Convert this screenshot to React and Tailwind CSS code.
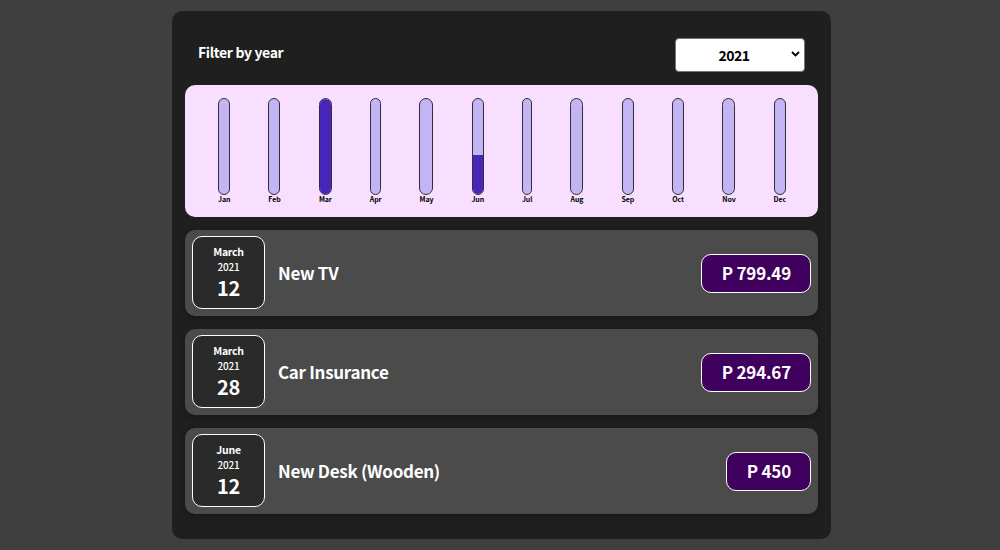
import React from 'react';

const months = [
  ['Jan', 'w-[12px]', 0], ['Feb', 'w-[12px]', 0], ['Mar', 'w-[13px]', 100], ['Apr', 'w-[11px]', 0],
  ['May', 'w-[14px]', 0], ['Jun', 'w-[12px]', 41], ['Jul', 'w-[10px]', 0], ['Aug', 'w-[13px]', 0],
  ['Sep', 'w-[12px]', 0], ['Oct', 'w-[12px]', 0], ['Nov', 'w-[13px]', 0], ['Dec', 'w-[12px]', 0],
];

const expenses = [
  { month: 'March', year: 2021, day: 12, title: 'New TV', amount: '799.49' },
  { month: 'March', year: 2021, day: 28, title: 'Car Insurance', amount: '294.67' },
  { month: 'June', year: 2021, day: 12, title: 'New Desk (Wooden)', amount: '450' },
];

function ChartBar({ label, width, fill }) {
  return (
    <div className={`flex flex-col items-center ${width}`}>
      <div className="flex h-[97px] w-full flex-col justify-end overflow-hidden rounded-full border border-[#313131] bg-[#c3b4f3]">
        <div className="w-full bg-[#4826b9]" style={{ height: `${fill}%` }} />
      </div>
      <div className="text-[7px] leading-[9px] font-bold tracking-[-0.1px] text-black">{label}</div>
    </div>
  );
}

function ExpenseItem({ item }) {
  return (
    <li className="flex h-[86px] items-center rounded-[10px] bg-[#4b4b4b] pr-[7px] pl-[7px] shadow-[0_2px_6px_rgba(0,0,0,0.25)]">
      <div className="mb-[1px] flex h-[73px] w-[73px] flex-col items-center rounded-[10px] border border-white bg-[#2a2a2a] pt-[7px]">
        <div className="text-[10.5px] leading-[16px] font-bold tracking-[-0.25px]">{item.month}</div>
        <div className="text-[10px] leading-[14px] font-medium tracking-[-0.2px]">{item.year}</div>
        <div className="text-[20px] leading-[28px] font-bold tracking-[-0.3px]">{item.day}</div>
      </div>
      <h2 className="ml-[13px] flex-1 text-[17px] leading-[26px] font-bold tracking-[-0.3px]">{item.title}</h2>
      <div className="flex h-[39px] items-center rounded-[10px] border border-white bg-[#40005d] pr-[19px] pl-[20px] text-[17px] leading-[26px] font-bold tracking-[-0.2px]">
        P {item.amount}
      </div>
    </li>
  );
}

export default function App() {
  return (
    <main className="h-[550px] overflow-hidden bg-[#3f3f3f] pt-[11px] font-['Noto_Sans_CJK_JP','Noto_Sans',sans-serif] text-white">
      <section className="ml-[172px] h-[528px] w-[659px] rounded-[10px] bg-[#1f1f1f] px-[13px]">
        <div className="flex h-[74px] items-start justify-between pr-[13px] pl-[13px]">
          <label className="pt-[31px] text-[14px] leading-[20px] font-bold tracking-[-0.35px]">Filter by year</label>
          <button className="mt-[27px] flex h-[34px] w-[130px] items-center rounded-[4px] border border-[#767676] bg-white pr-[4px] text-black">
            <span className="flex-1 pl-[1px] text-center text-[14px] leading-[20px] font-bold tracking-[-0.5px]">2021</span>
            <svg className="mb-[2px] h-[6px] w-[9px]" viewBox="0 0 9 6" fill="none">
              <path d="M1 1l3.5 3.5L8 1" stroke="currentColor" strokeWidth="1.8" />
            </svg>
          </button>
        </div>
        <div className="flex h-[132px] justify-around rounded-[10px] bg-[#f8dfff] pt-[13px] pr-[13px] pl-[14px]">
          {months.map(([label, width, fill]) => (
            <ChartBar key={label} label={label} width={width} fill={fill} />
          ))}
        </div>
        <ul className="mt-[13px] flex flex-col gap-[13px]">
          {expenses.map((item) => (
            <ExpenseItem key={item.title} item={item} />
          ))}
        </ul>
      </section>
    </main>
  );
}
